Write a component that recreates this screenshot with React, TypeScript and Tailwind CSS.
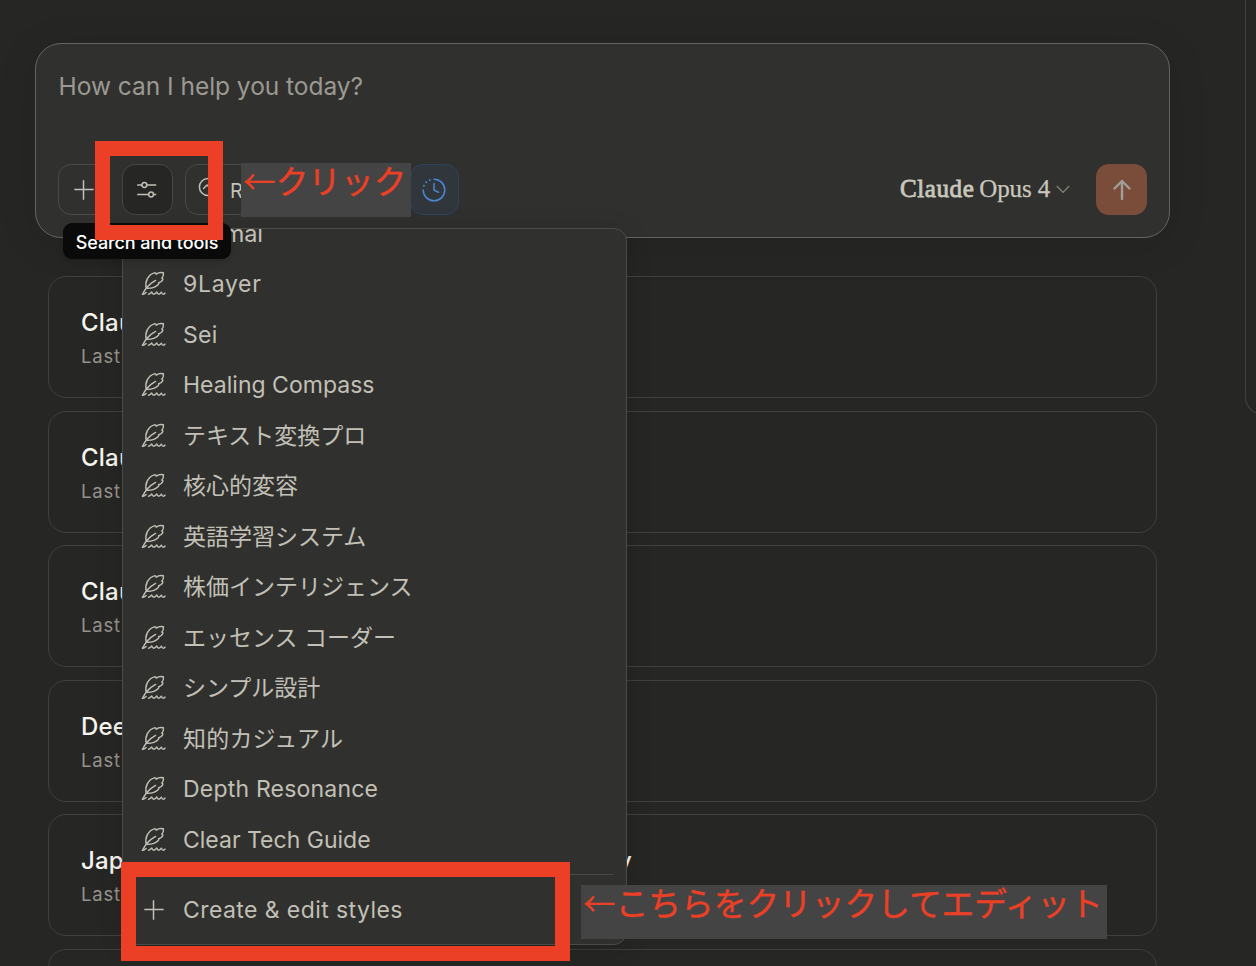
import type { ReactNode } from "react";

const styleNames = [
  { name: "9Layer", tone: "tracking-[0.7px]" },
  { name: "Sei", tone: "tracking-[0.3px]" },
  { name: "Healing Compass", tone: "tracking-[0.02px]" },
  { name: "テキスト変換プロ", tone: "" },
  { name: "核心的変容", tone: "" },
  { name: "英語学習システム", tone: "" },
  { name: "株価インテリジェンス", tone: "" },
  { name: "エッセンス コーダー", tone: "" },
  { name: "シンプル設計", tone: "" },
  { name: "知的カジュアル", tone: "tracking-[0.2px]" },
  { name: "Depth Resonance", tone: "tracking-[0.2px]" },
  { name: "Clear Tech Guide", tone: "" },
];

const chats = ["Claude", "Claude", "Claude", "Deep", "Japan", "Claude"];

function QuillIcon() {
  return (
    <svg width="26" height="26" viewBox="0 0 26 26" fill="none" stroke="currentColor" strokeWidth="1.45" strokeLinecap="round" strokeLinejoin="round" className="shrink-0">
      <path d="M1.6 23.4C4 17.8 8.2 13 14.6 9.4" />
      <path d="M5.3 17.3C3.6 11 6.9 3.8 13.4 1.9c1.2-.3 1.6.3 1.8 1.3 1.8-1.4 4.6-1.9 7.2-1.4.3 1.9-.2 3.8-1.6 5.2 1 .3 1.2 1 .8 1.9-.8 1.7-2.2 2.6-4 2.9.5.6.3 1.1-.3 1.7-2.5 2.6-6.6 4.1-12 3.8" />
      <path d="M1.4 23.3c1.6-.1 2.6-.8 3.7-1.9" />
      <path d="M7.5 23.2c1.2-.1 2-.9 3.2-2.2.5 1.5 1.1 2.2 2 2.2 1 0 2-.8 3.1-2.2.5 1.5 1.1 2.2 2 2.2 1 0 1.7-.7 2.6-2 .6 1.4 1.2 2 2 2 .7 0 1.2-.4 1.6-1.1" />
    </svg>
  );
}

function PlusIcon() {
  return (
    <svg width="22" height="22" viewBox="0 0 22 22" fill="none" stroke="currentColor" strokeWidth="1.5" className="shrink-0">
      <path d="M10.5 1.3v19.4M1.3 10.5h19.4" />
    </svg>
  );
}

function ToolButton({ children, className }: { children: ReactNode; className: string }) {
  return (
    <button className={`flex h-[51px] shrink-0 items-center rounded-[13px] border ${className}`}>
      {children}
    </button>
  );
}

function Composer() {
  return (
    <section className="ml-[35px] mt-[43px] flex h-[195px] w-[1135px] flex-col rounded-[26px] border border-[#656560] bg-[#30302e] shadow-[0_6px_40px_rgba(0,0,0,0.1)]">
      <p className="ml-[22.5px] mt-[26px] h-8 whitespace-nowrap text-[24.5px] leading-8 tracking-[-0.03px] text-[#9b9991]">
        How can I help you today?
      </p>
      <div className="mt-[62px] flex items-center pl-[22px] pr-[22px]">
        <ToolButton className="w-[51px] justify-center border-[#4a4a47] text-[#c2c0b6]">
          <PlusIcon />
        </ToolButton>
        <ToolButton className="ml-[13px] w-[51px] justify-center border-[#464643] bg-[#262624] text-[#c2c0b6]">
          <svg width="22" height="20" viewBox="0 0 22 20" fill="none" stroke="currentColor" strokeWidth="1.5" className="-ml-[2px]">
            <path d="M1.2 5H6M11 5h9.2M1.2 14.5h11.5M17.7 14.5h2.5" />
            <circle cx="8.4" cy="5" r="2.4" />
            <circle cx="15.1" cy="14.5" r="2.4" />
          </svg>
        </ToolButton>
        <ToolButton className="ml-3 w-[215px] border-[#4a4a47] pl-3 text-[#c2c0b6]">
          <svg width="25" height="25" viewBox="0 0 25 25" fill="none" stroke="currentColor" strokeWidth="1.5" strokeLinecap="round" strokeLinejoin="round">
            <circle cx="10" cy="10" r="8.6" />
            <path d="m16 16 7 7M5.5 11.5 9 8l2.8 2.8L15 8" />
          </svg>
          <span className="ml-[7px] mt-[2px] text-[20px]">R</span>
        </ToolButton>
        <ToolButton className="ml-[10px] w-[49px] justify-center border-[#2e435e] bg-[#30363b] text-[#4b87d4]">
          <svg width="24" height="24" viewBox="0 0 24 24" fill="none" stroke="currentColor" strokeWidth="1.5" strokeLinecap="round" className="-ml-[2px]">
            <path d="M12 1.2A10.8 10.8 0 1 1 1.2 12" />
            <path d="M12 5.5V12l4.6 2.3" />
            <path d="M1.9 7.8h.01M4.3 4.3h.01M7.8 2h.01" strokeWidth="1.9" />
          </svg>
        </ToolButton>
        <div className="ml-auto flex items-center text-[#c9c7bd]">
          <span className="-mt-[2px] whitespace-nowrap font-['Liberation_Serif',serif] text-[25px] leading-8">
            <span className="tracking-[0.6px] [-webkit-text-stroke:0.8px_currentColor]">Claude</span>
            <span className="ml-[5px] tracking-[-0.15px] [-webkit-text-stroke:0.25px_currentColor]">Opus 4</span>
          </span>
          <svg width="14" height="9" viewBox="0 0 14 9" fill="none" stroke="#85837b" strokeWidth="1.2" className="ml-[6px]">
            <path d="m.8 1 6.2 6.5L13.2 1" />
          </svg>
          <button className="ml-[26px] flex h-[51px] w-[51px] items-center justify-center rounded-[13px] bg-[#7a4d3a] text-[#a09e9a]">
            <svg width="20" height="22" viewBox="0 0 20 22" fill="none" stroke="currentColor" strokeWidth="2.4" strokeLinecap="round" strokeLinejoin="round">
              <path d="M10 20V2M2.5 9.5 10 2l7.5 7.5" />
            </svg>
          </button>
        </div>
      </div>
    </section>
  );
}

function ChatList() {
  return (
    <section className="ml-12 mt-[38px] flex w-[1109px] flex-col gap-[12.6px]">
      {chats.map((title, i) => (
        <article key={i} className="flex h-[122px] shrink-0 flex-col rounded-[18px] border border-[#3f3f3c] pl-8 pt-[30px]">
          {i < 5 && (
            <>
              <h2 className="flex h-8 w-[551px] items-center justify-between whitespace-nowrap text-[24px] font-medium leading-8 tracking-[0.2px] text-[#f7f5ee]">
                <span>{title}</span>
                {i === 4 && <span>y</span>}
              </h2>
              <p className="mt-[5px] text-[18.5px] leading-6 tracking-[0.8px] text-[#96948c]">Last</p>
            </>
          )}
        </article>
      ))}
    </section>
  );
}

function StylesMenu() {
  return (
    <section className="absolute left-[122px] top-[228px] flex h-[717px] w-[505px] flex-col overflow-hidden rounded-[13px] border border-[#4a4a47] bg-[#30302e] text-[#c2c0b6] shadow-[0_4px_24px_rgba(0,0,0,0.15)]">
      <div className="-mt-[21px] flex h-[50.7px] shrink-0 items-center pl-[60px] text-[23.5px] tracking-[-0.1px]">
        Normal
      </div>
      {styleNames.map(({ name, tone }) => (
        <div key={name} className="flex h-[50.56px] shrink-0 items-center pl-[18px]">
          <QuillIcon />
          <span className={`ml-[16px] whitespace-nowrap text-[23px] leading-8 ${tone}`}>{name}</span>
        </div>
      ))}
      <div className="mx-[13px] mt-[8.5px] h-px shrink-0 bg-[#4a4a47]" />
      <div className="mt-[10px] flex h-[50.5px] shrink-0 items-center pl-[20px]">
        <PlusIcon />
        <span className="ml-[18px] text-[23px] leading-8 tracking-[0.42px]">Create &amp; edit styles</span>
      </div>
    </section>
  );
}

export default function App() {
  return (
    <main className="relative flex h-[966px] w-[1256px] flex-col overflow-hidden bg-[#262624] font-['Inter','Noto_Sans_CJK_JP',sans-serif]">
      <div className="flex">
        <div className="w-[1245px] shrink-0">
          <Composer />
          <ChatList />
        </div>
        <aside className="h-[415px] w-[60px] shrink-0 rounded-bl-[18px] border-b border-l border-[#42423f]" />
      </div>
      <StylesMenu />
      <div className="absolute left-[63px] top-[223px] flex h-[36px] w-[168px] items-center justify-center rounded-[9px] bg-[#0a0a0a] text-[18px] text-white shadow-md">
        <span className="mt-[3px] whitespace-nowrap font-medium tracking-[-0.1px]">Search and tools</span>
      </div>
      <div className="absolute left-[95px] top-[141px] h-[99px] w-[128px] border-[15px] border-[#eb4026]" />
      <div className="absolute left-[241px] top-[163px] h-[54px] w-[170px] whitespace-nowrap bg-[#444444] pl-[2px] font-['Noto_Sans_CJK_JP',sans-serif] text-[32.7px] leading-[34px] text-[#eb4026]">
        ←<span className="[-webkit-text-stroke:0.4px_currentColor]">クリック</span>
      </div>
      <div className="absolute left-[121px] top-[862px] h-[99px] w-[449px] border-[15px] border-[#eb4026]" />
      <div className="absolute left-[581px] top-[885px] h-[54px] w-[526px] whitespace-nowrap bg-[#444444] pl-[2px] font-['Noto_Sans_CJK_JP',sans-serif] text-[32.7px] leading-[34px] text-[#eb4026]">
        ←<span className="[-webkit-text-stroke:0.4px_currentColor]">こちらをクリックしてエディット</span>
      </div>
    </main>
  );
}
